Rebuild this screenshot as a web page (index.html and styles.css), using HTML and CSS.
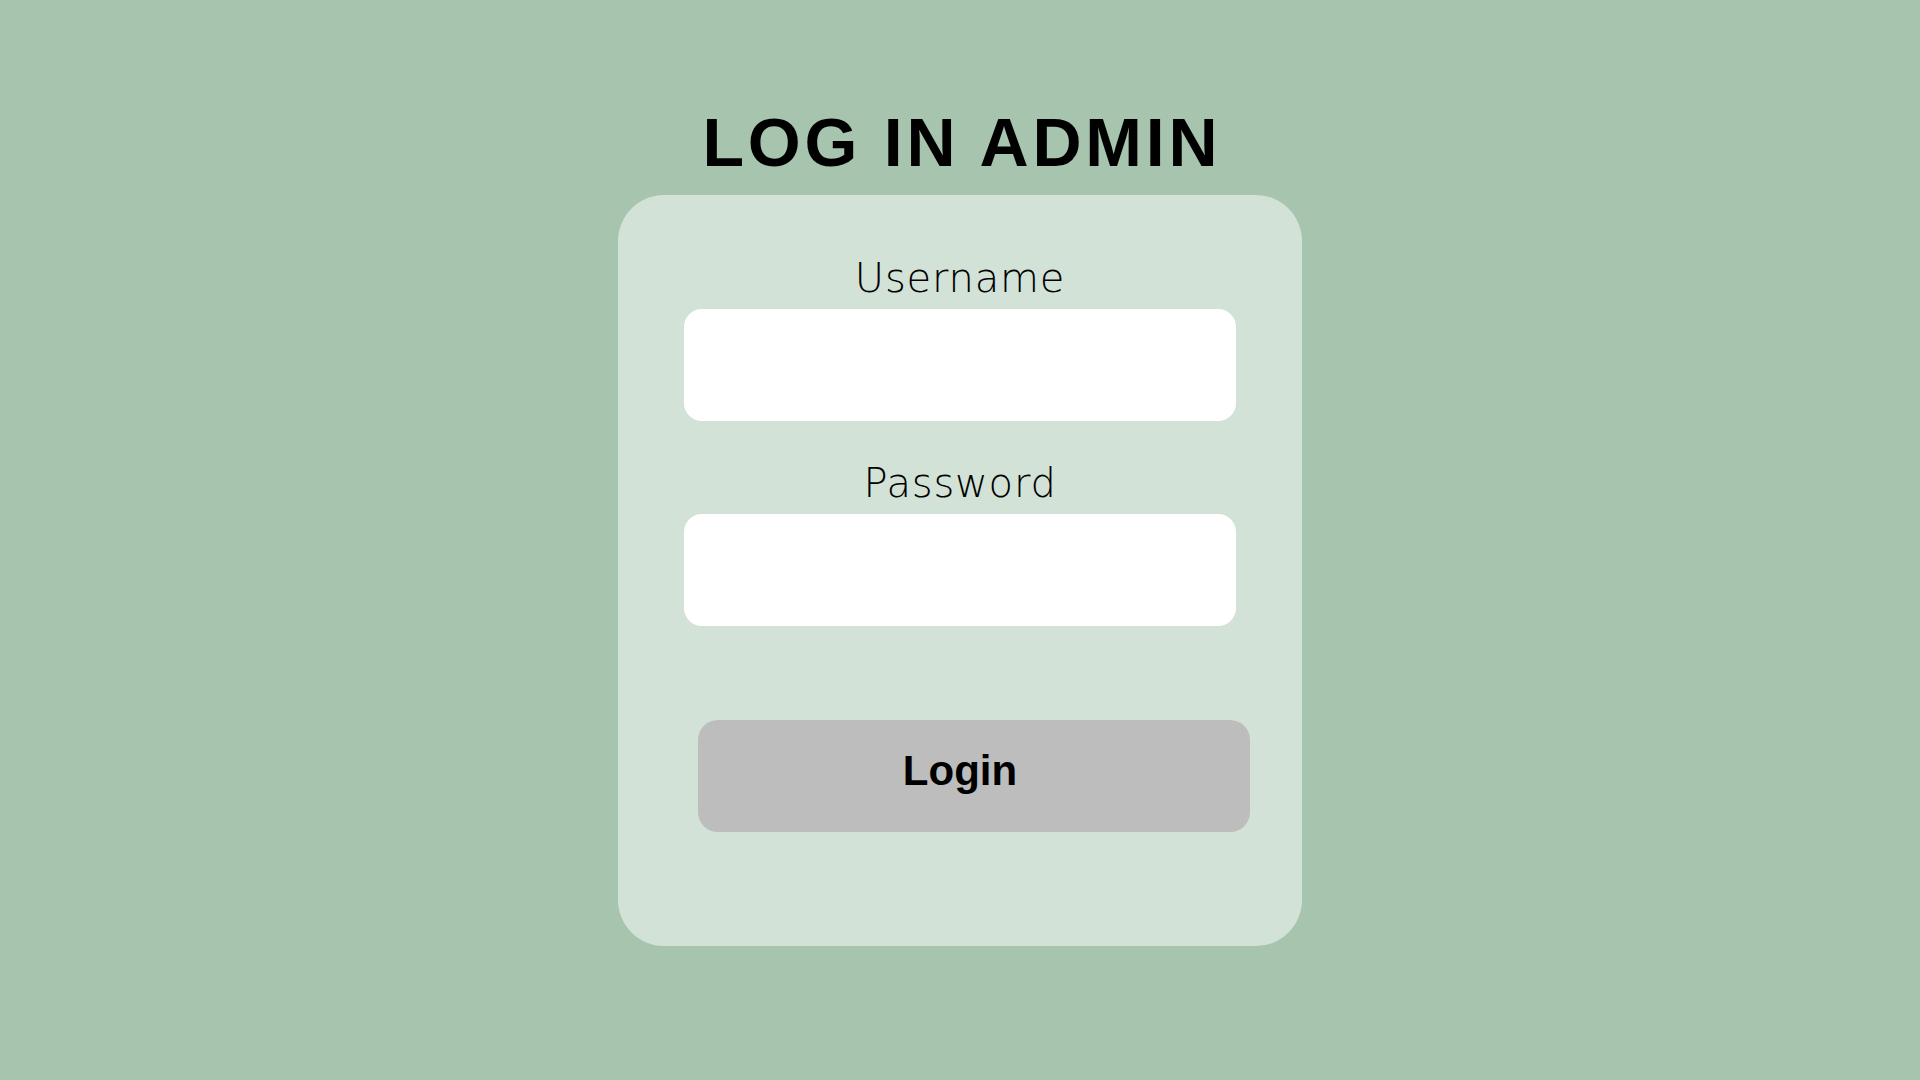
FILE: index.html
```html
<!DOCTYPE html>
<html lang="en">
<head>
<meta charset="utf-8">
<title>Log in Admin</title>
<link rel="stylesheet" href="styles.css">
</head>
<body>
<main class="page">
  <h1 class="title">LOG IN ADMIN</h1>
  <form class="card">
    <label class="label" for="username">Username</label>
    <input class="field" id="username" type="text">
    <label class="label label-second" for="password">Password</label>
    <input class="field" id="password" type="password">
    <button class="btn" type="button">Login</button>
  </form>
</main>
</body>
</html>
```

FILE: styles.css
```css
html, body {
  margin: 0;
  padding: 0;
}
body {
  background: #a7c4ae;
  width: 1920px;
  height: 1080px;
  overflow: hidden;
}
.page {
  display: flex;
  flex-direction: column;
  align-items: center;
  padding-top: 102px;
}
.title {
  margin: 0 -3.8px 13px 0;
  font-family: "Liberation Sans", Arial, sans-serif;
  font-weight: 700;
  font-size: 68px;
  line-height: 80px;
  letter-spacing: 3.8px;
  color: #000;
}
.card {
  box-sizing: border-box;
  width: 684px;
  height: 751px;
  background: #d2e2d6;
  border-radius: 46px;
  display: flex;
  flex-direction: column;
  align-items: center;
  padding-top: 59px;
  margin: 0;
}
.label {
  font-family: "DejaVu Sans", sans-serif;
  font-weight: 200;
  font-size: 40px;
  line-height: 48px;
  letter-spacing: 0.8px;
  color: #000;
  margin-bottom: 7px;
}
.label-second {
  margin-top: 38px;
}
.field {
  box-sizing: border-box;
  width: 552px;
  height: 112px;
  border: none;
  border-radius: 18px;
  background: #fff;
  outline: none;
  margin: 0;
  padding: 0 20px;
}
.btn {
  box-sizing: border-box;
  width: 552px;
  height: 112px;
  margin: 94px 0 0 28px;
  border: none;
  border-radius: 20px;
  background: #bdbdbd;
  display: flex;
  align-items: center;
  justify-content: center;
  padding: 0 28px 11px 0;
  font-family: "Liberation Sans", Arial, sans-serif;
  font-weight: 700;
  font-size: 42px;
  color: #000;
}
```
